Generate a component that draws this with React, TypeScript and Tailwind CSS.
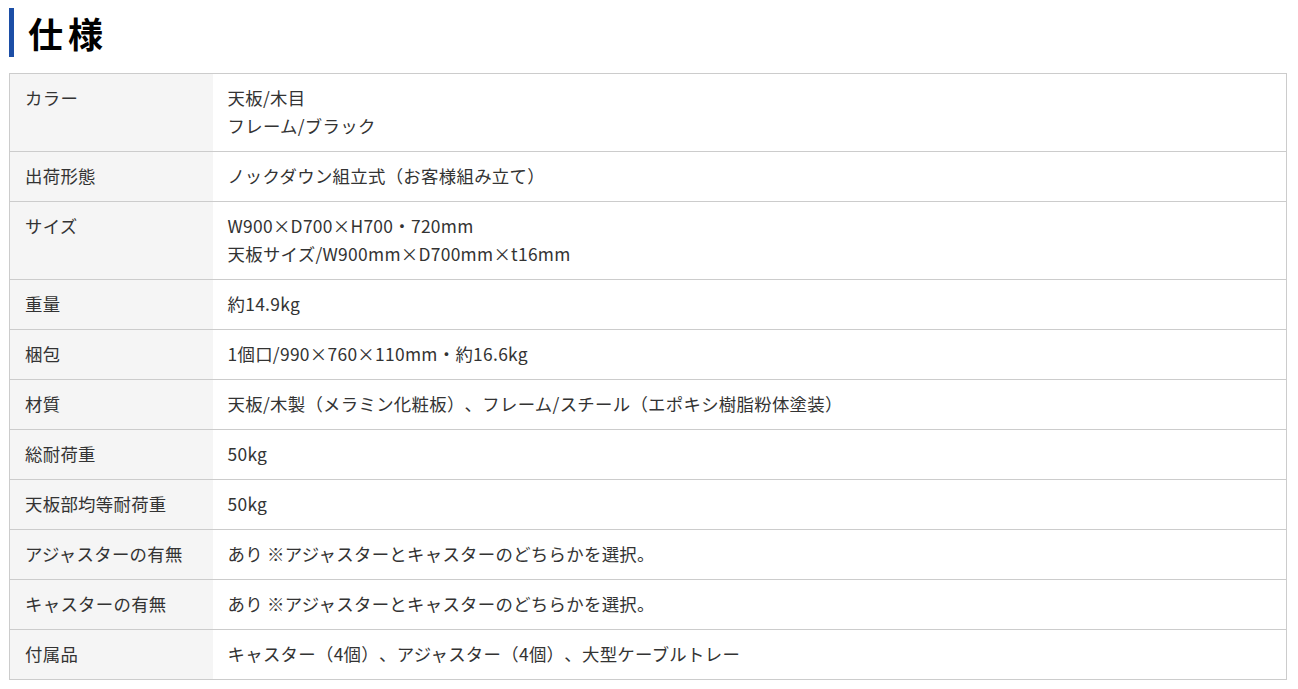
import React from 'react';

const SPECS: { label: string; value: string[] }[] = [
    { label: 'カラー', value: ['天板/木目', 'フレーム/ブラック'] },
    { label: '出荷形態', value: ['ノックダウン組立式（お客様組み立て）'] },
    { label: 'サイズ', value: ['W900×D700×H700・720mm', '天板サイズ/W900mm×D700mm×t16mm'] },
    { label: '重量', value: ['約14.9kg'] },
    { label: '梱包', value: ['1個口/990×760×110mm・約16.6kg'] },
    { label: '材質', value: ['天板/木製（メラミン化粧板）、フレーム/スチール（エポキシ樹脂粉体塗装）'] },
    { label: '総耐荷重', value: ['50kg'] },
    { label: '天板部均等耐荷重', value: ['50kg'] },
    { label: 'アジャスターの有無', value: ['あり ※アジャスターとキャスターのどちらかを選択。'] },
    { label: 'キャスターの有無', value: ['あり ※アジャスターとキャスターのどちらかを選択。'] },
    { label: '付属品', value: ['キャスター（4個）、アジャスター（4個）、大型ケーブルトレー'] },
];

export default function App() {
    return (
        <div
            className="bg-white min-h-[689px] pt-[8px] pl-[9px] pr-[11px] text-[#333] [text-spacing-trim:space-all]"
            style={{ fontFamily: '"Noto Sans CJK JP", sans-serif' }}
        >
            <h2 className="flex items-center h-[49px] border-l-[5px] border-[#1c4ea6] pl-[14px] text-[35px] font-bold tracking-[5px] text-black leading-none">
                仕様
            </h2>
            <table className="mt-[16px] w-full border-collapse border border-[#cccccc] text-[17.4px] leading-[28px] tracking-[0.3px]">
                <tbody>
                    {SPECS.map((row) => (
                        <tr key={row.label} className="border-b border-[#cccccc]">
                            <th className="w-[203px] bg-[#f5f5f5] pl-[15px] pt-[10px] pb-[11px] text-left font-normal align-top">
                                {row.label}
                            </th>
                            <td className="pl-[15px] pt-[10px] pb-[11px] align-top">
                                {row.value.map((line) => (
                                    <div key={line}>{line}</div>
                                ))}
                            </td>
                        </tr>
                    ))}
                </tbody>
            </table>
        </div>
    );
}
